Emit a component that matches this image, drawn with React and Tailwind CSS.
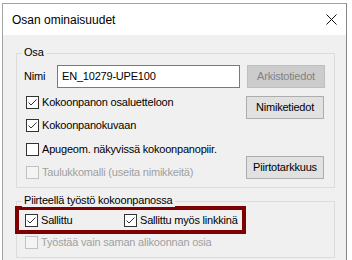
import React from "react";

const font = { fontFamily: '"Liberation Sans", Arial, sans-serif' };

function CheckBox({ checked = false, disabled = false, label, className = "" }) {
  return (
    <label className={`flex items-center h-[13px] ${className}`}>
      <span
        className={`relative w-[13px] h-[13px] shrink-0 border ${
          disabled ? "border-[#c2c2c2] bg-[#f4f4f4]" : "border-[#333333] bg-white"
        }`}
      >
        {checked && (
          <svg
            width="11"
            height="11"
            viewBox="0 0 11 11"
            className="absolute left-0 top-0"
          >
            <polyline
              points="1.5,5.5 4,8 9.5,2.5"
              fill="none"
              stroke="#333333"
              strokeWidth="1"
            />
          </svg>
        )}
      </span>
      <span
        className={`ml-[3px] text-[11px] leading-[13px] tracking-[-0.2px] whitespace-nowrap ${
          disabled ? "text-[#a0a0a0]" : "text-black"
        }`}
      >
        {label}
      </span>
    </label>
  );
}

function Button({ children, disabled = false, className = "" }) {
  return (
    <button
      type="button"
      disabled={disabled}
      className={`w-[78px] h-[23px] border text-[11px] leading-none tracking-[-0.2px] ${
        disabled
          ? "bg-[#cccccc] border-[#bfbfbf] text-[#838383]"
          : "bg-[#e1e1e1] border-[#adadad] text-black"
      } ${className}`}
    >
      {children}
    </button>
  );
}

function GroupBox({ title, className = "", children }) {
  return (
    <div className={`relative border border-[#dcdcdc] ${className}`}>
      <span className="absolute left-[5px] top-[-8px] px-[2px] bg-[#f0f0f0] text-[11px] leading-[13px] tracking-[-0.2px] text-black whitespace-nowrap">
        {title}
      </span>
      {children}
    </div>
  );
}

export default function App() {
  return (
    <div className="w-[352px] h-[260px] bg-white overflow-hidden pt-[3px] pl-[2px]" style={font}>
      <div className="w-[345px] h-[257px] border-t border-l border-r border-t-[#a3a3a3] border-l-[#a3a3a3] border-r-[#858585] flex flex-col">
        <div className="h-[31px] bg-white flex items-center justify-between pl-[9px] pr-[9px]">
          <span className="text-[12px] text-black">Osan ominaisuudet</span>
          <svg width="11" height="11" viewBox="0 0 11 11">
            <path d="M0.5 0.5 L10.5 10.5 M10.5 0.5 L0.5 10.5" stroke="#111" strokeWidth="1" />
          </svg>
        </div>

        <div className="flex-1 bg-[#f0f0f0] pt-[18px] pl-[13px] pr-[11px]">
          <GroupBox title="Osa" className="h-[135px]">
            <div className="flex items-center mt-[11px] pl-[7px] h-[23px]">
              <span className="w-[33px] text-[11px] tracking-[-0.2px] text-black">Nimi</span>
              <div className="w-[183px] h-[23px] border border-[#7a7a7a] bg-white flex items-center pl-[4px] text-[11px] tracking-[-0.2px] text-black">
                EN_10279-UPE100
              </div>
              <Button disabled className="ml-[7px]">
                Arkistotiedot
              </Button>
            </div>

            <div className="flex">
              <div className="flex-1 pl-[9px] pt-[8px] flex flex-col">
                <CheckBox checked label="Kokoonpanon osaluetteloon" />
                <CheckBox checked label="Kokoonpanokuvaan" className="mt-[10px]" />
                <CheckBox label="Apugeom. näkyvissä kokoonpanopiir." className="mt-[11px]" />
                <CheckBox disabled label="Taulukkomalli (useita nimikkeitä)" className="mt-[10px]" />
              </div>
              <div className="w-[95px] pl-[7px] pt-[8px] flex flex-col">
                <Button>Nimiketiedot</Button>
                <Button className="mt-[37px]">Piirtotarkkuus</Button>
              </div>
            </div>
          </GroupBox>

          <GroupBox title="Piirteellä työstö kokoonpanossa" className="mt-[13px] h-[57px]">
            <div className="mt-[4px] ml-[-2px] w-[231px] h-[28px] border-4 border-[#7f0000] flex items-center pl-[6px]">
              <CheckBox checked label="Sallittu" className="w-[99px]" />
              <CheckBox checked label="Sallittu myös linkkinä" />
            </div>
            <div className="pl-[8px] mt-[2px]">
              <CheckBox disabled label="Työstää vain saman alikoonnan osia" />
            </div>
          </GroupBox>
        </div>
      </div>
    </div>
  );
}
